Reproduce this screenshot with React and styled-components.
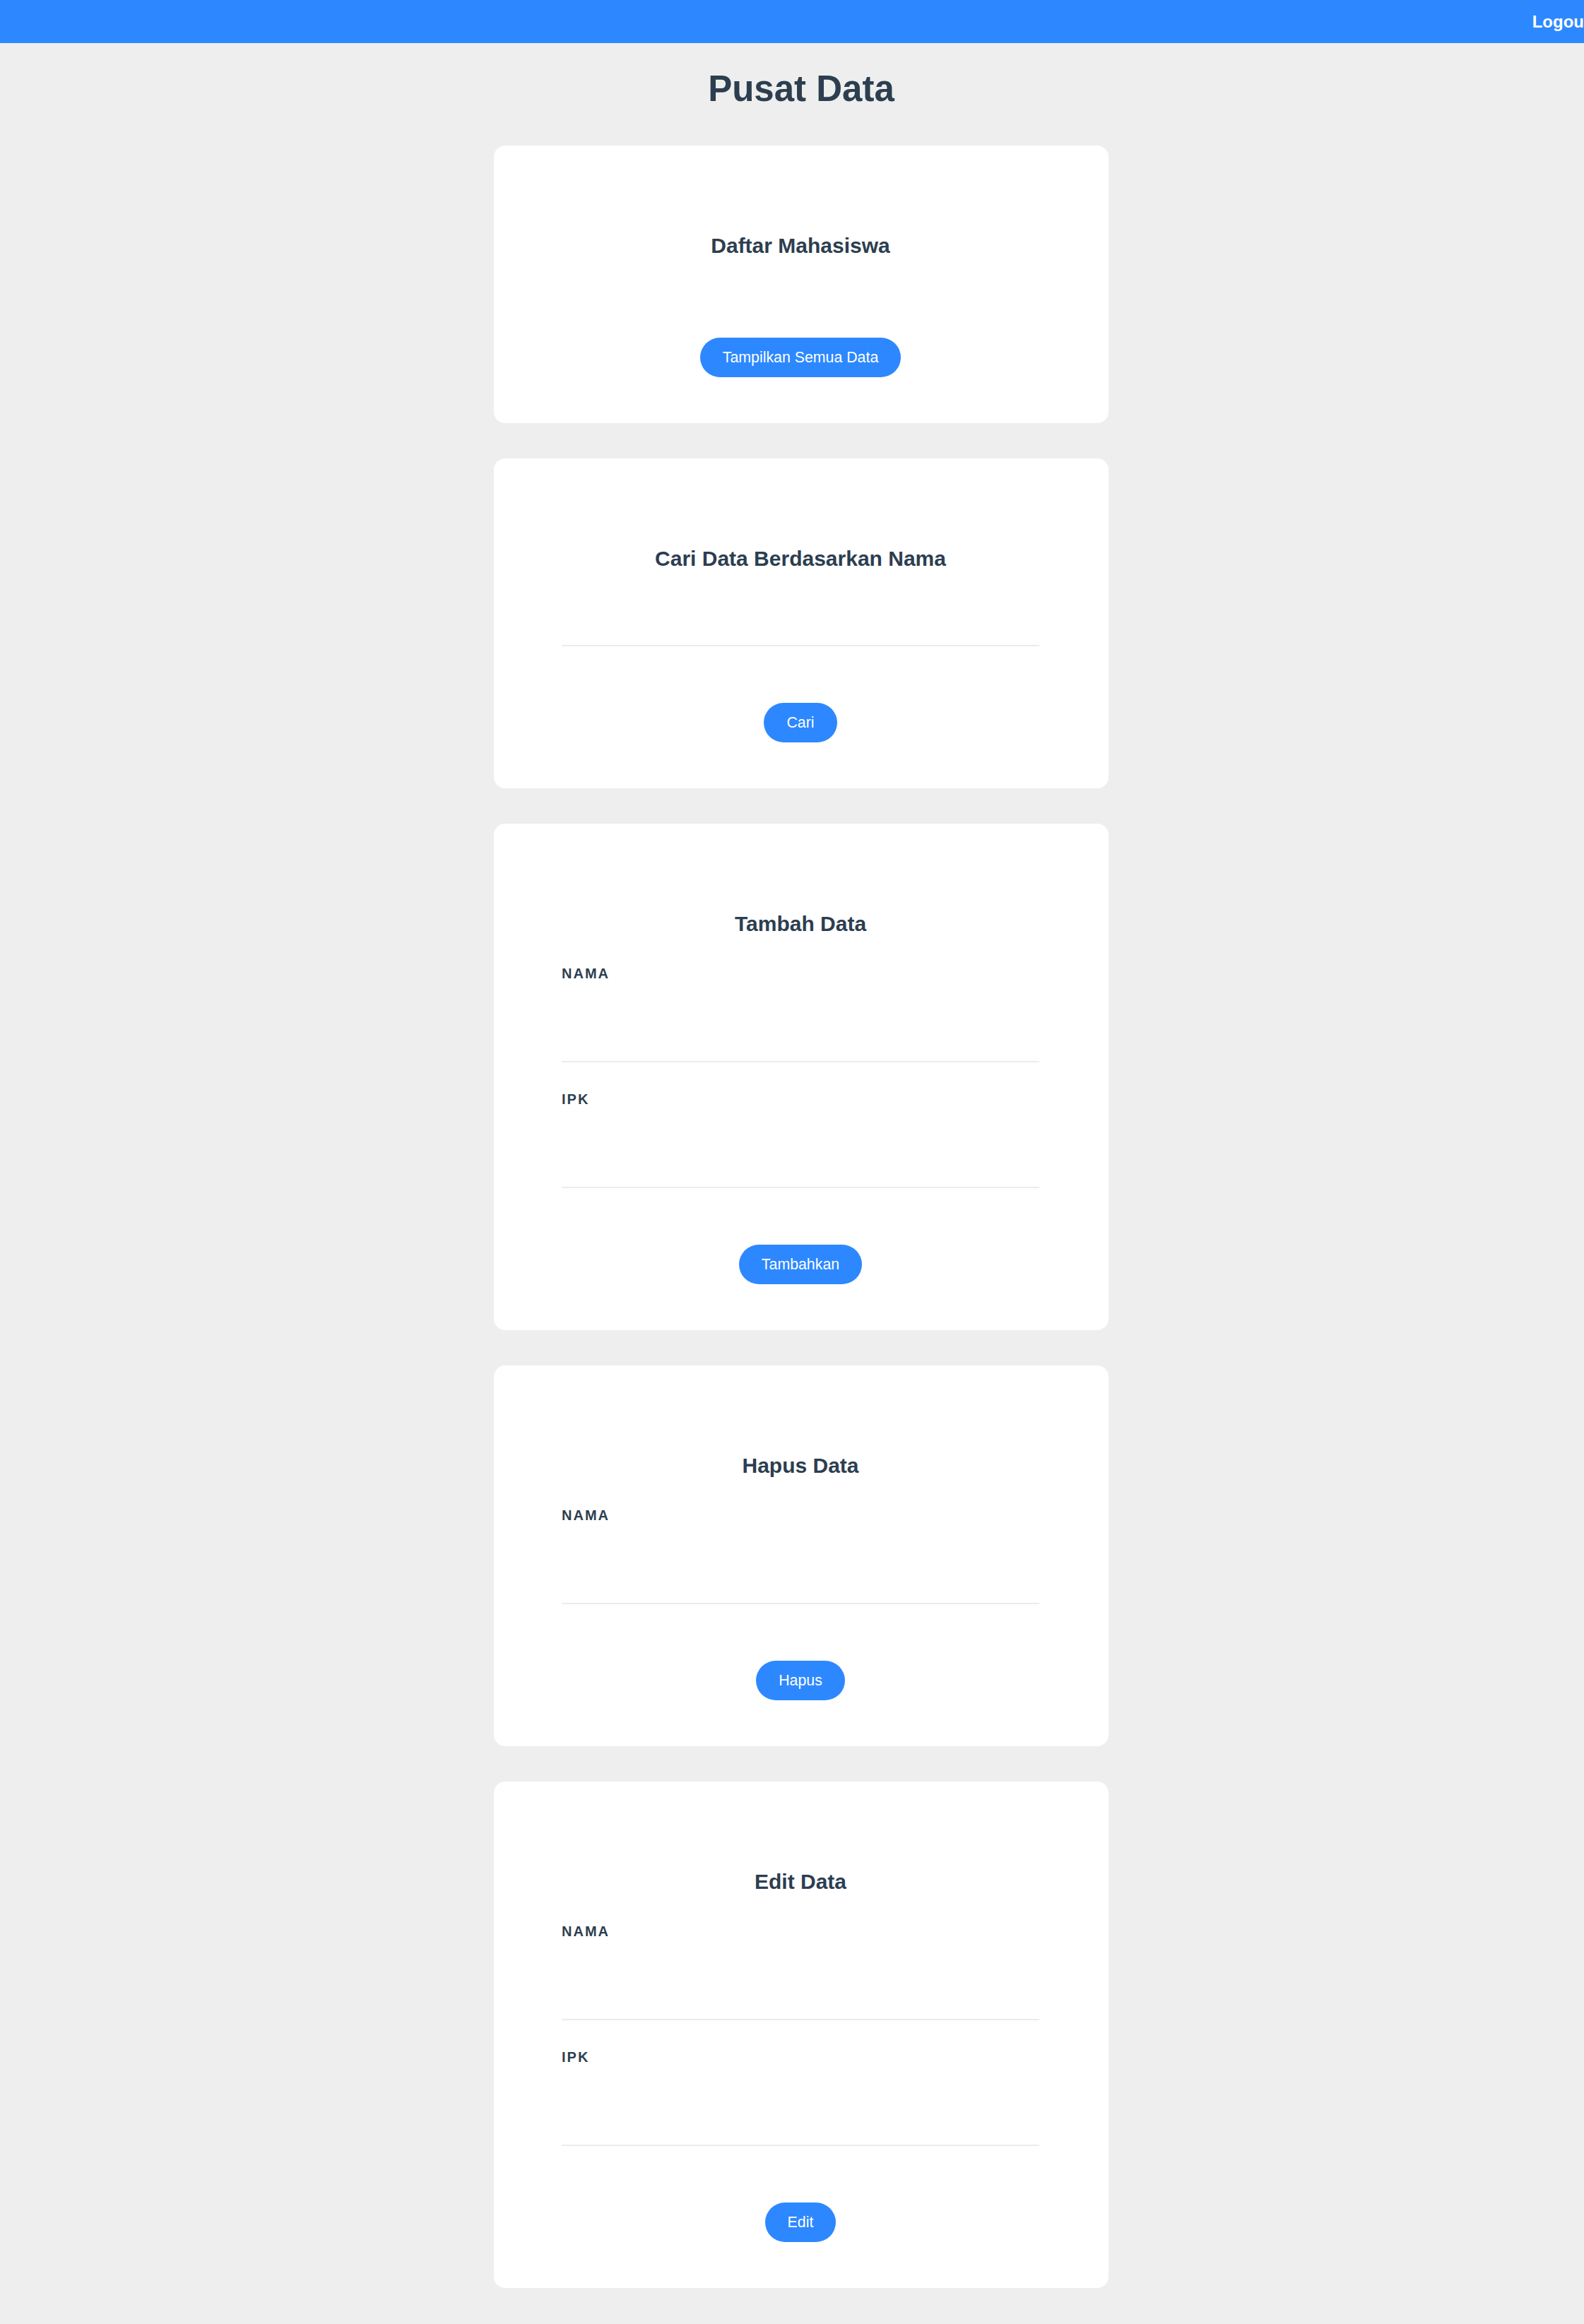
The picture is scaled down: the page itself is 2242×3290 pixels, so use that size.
import React from "react";
import styled, { createGlobalStyle } from "styled-components";

const GlobalStyle = createGlobalStyle`
    html, body {
        margin: 0;
        padding: 0;
        overflow-x: hidden;
        background: #eeeeee;
    }
    body {
        font-family: "Liberation Sans", Arial, sans-serif;
        color: #2c3e50;
    }
    * { box-sizing: border-box; }
`

const Page = styled.div`
    width: 2268px;
    min-height: 100vh;
    background: #eeeeee;
    padding-bottom: 50px;
`

const Navbar = styled.nav`
    height: 61px;
    background-color: #2d88ff;
    display: flex;
    align-items: center;
    justify-content: flex-end;
    padding-right: 18px;

    .logout {
        color: #ffffff;
        font-size: 24px;
        font-weight: 700;
        cursor: pointer;
    }
`

const Title = styled.h1`
    margin: 35px 0 50px;
    text-align: center;
    font-size: 51px;
    line-height: 60px;
    font-weight: 700;
    color: #2c3e50;
`

const Stack = styled.main`
    display: flex;
    flex-direction: column;
    align-items: center;
    gap: 50px;
`

const Card = styled.section`
    width: 870px;
    background: #ffffff;
    border-radius: 16px;
    padding: 124px 98px 65px 96px;
    display: flex;
    flex-direction: column;
`

const Heading = styled.h2`
    margin: 0;
    text-align: center;
    font-size: 30px;
    line-height: 36px;
    font-weight: 700;
    color: #2c3e50;
`

const Field = styled.div`
    margin-top: 41px;
    display: flex;
    flex-direction: column;
`

const Label = styled.label`
    display: block;
    font-size: 20px;
    line-height: 22px;
    font-weight: 700;
    letter-spacing: 2px;
    text-transform: uppercase;
    color: #2c3e50;
`

const Input = styled.input`
    width: 100%;
    height: ${props => props.$height || 115}px;
    border: none;
    border-bottom: 2px solid #ececec;
    outline: none;
    background: transparent;
    font-family: inherit;
    font-size: 21px;
    color: #2c3e50;
`

const ActionButton = styled.button`
    align-self: center;
    margin-top: ${props => props.$gap || 80}px;
    padding: 16px 32px;
    border: none;
    border-radius: 999px;
    background-color: #2d88ff;
    color: #ffffff;
    font-family: "Liberation Sans", Arial, sans-serif;
    font-size: 21.33px;
    line-height: 24px;
    cursor: pointer;
`

function FormCard({ title, fields, action }) {
    return (
        <Card>
            <Heading>{title}</Heading>
            {fields.map(f => (
                <Field key={f}>
                    <Label>{f}</Label>
                    <Input type="text" />
                </Field>
            ))}
            <ActionButton>{action}</ActionButton>
        </Card>
    )
}

export default function App() {
    return (
        <Page>
            <GlobalStyle />
            <Navbar>
                <span className="logout">Logout</span>
            </Navbar>
            <Title>Pusat Data</Title>
            <Stack>
                <Card>
                    <Heading>Daftar Mahasiswa</Heading>
                    <ActionButton $gap={112}>Tampilkan Semua Data</ActionButton>
                </Card>
                <Card>
                    <Heading>Cari Data Berdasarkan Nama</Heading>
                    <Input type="text" $height={106} />
                    <ActionButton>Cari</ActionButton>
                </Card>
                <FormCard title="Tambah Data" fields={["Nama", "IPK"]} action="Tambahkan" />
                <FormCard title="Hapus Data" fields={["Nama"]} action="Hapus" />
                <FormCard title="Edit Data" fields={["Nama", "IPK"]} action="Edit" />
            </Stack>
        </Page>
    )
}
